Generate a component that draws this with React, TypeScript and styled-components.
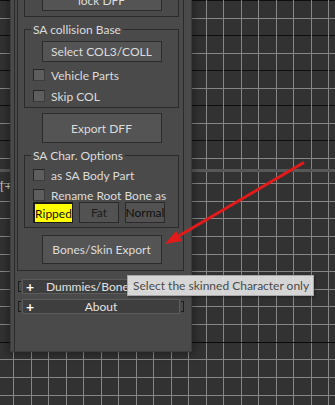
import React from 'react';
import styled, { createGlobalStyle, css } from 'styled-components';

// Colours
const GRID = '#868686';
const VIEW_BG = '#323232';
const PANEL_BG = '#4a4a4a';
const DARK_LINE = '#2a2a2a';
const TEXT = '#dcdcdc';
const UI_FONT = '"Lato", "Noto Sans", sans-serif';

const GlobalStyle = createGlobalStyle`
	html, body {
		margin: 0;
		padding: 0;
		background: ${ VIEW_BG };
	}
	body {
		font-family: ${ UI_FONT };
		font-size: 12px;
		color: ${ TEXT };
	}
	* {
		box-sizing: border-box;
	}
`;

// Vertical grid lines sit at x = 13 and 31 (mod 35)
const columnLines = `linear-gradient(to right, transparent 13px, ${ GRID } 13px, ${ GRID } 14px, transparent 14px, transparent 31px, ${ GRID } 31px, ${ GRID } 32px, transparent 32px)`;

/**
 * Viewport screen
 */
const App: React.FC = () => (
	<>
		<GlobalStyle />
		<Desktop>
			<TopViewport />
			<Splitter />
			<BottomViewport>
				<ViewportLabel>[+]</ViewportLabel>
			</BottomViewport>

			<Panel>
				<ScrollArea>
					<Rollout>
						<Group $mt={ 8 } $pt={ 6 } $pb={ 5 }>
							<legend>Export</legend>
							<Button $h={ 21 }>lock DFF</Button>
						</Group>

						<Group $mt={ 5 } $pt={ 4 } $pb={ 5 }>
							<legend>SA collision Base</legend>
							<Button $h={ 21 }>Select COL3/COLL</Button>
							<CheckRow $mt={ 7 }>
								<CheckBox />
								Vehicle Parts
							</CheckRow>
							<CheckRow $mt={ 9 }>
								<CheckBox />
								Skip COL
							</CheckRow>
						</Group>

						<Button $h={ 30 } $mt={ 5 }>Export DFF</Button>

						<Group $mt={ 5 } $pt={ 0 } $pb={ 4 }>
							<legend>SA Char. Options</legend>
							<CheckRow $mt={ 6 }>
								<CheckBox />
								as SA Body Part
							</CheckRow>
							<CheckRow $mt={ 8 }>
								<CheckBox />
								Rename Root Bone as
							</CheckRow>
							<ToggleRow>
								<Toggle $active>Ripped</Toggle>
								<Toggle>Fat</Toggle>
								<Toggle $dark>Normal</Toggle>
							</ToggleRow>
						</Group>

						<Button $h={ 29 } $mt={ 7 }>Bones/Skin Export</Button>
					</Rollout>

					<RolloutStub $mt={ 8 }>
						<Bracket />
						<StubBar>
							<Plus>+</Plus>
							<StubTitle $left>Dummies/Bones Helper</StubTitle>
						</StubBar>
						<Bracket $right />
					</RolloutStub>
					<RolloutStub $mt={ 5 }>
						<Bracket />
						<StubBar>
							<Plus>+</Plus>
							<StubTitle>About</StubTitle>
						</StubBar>
						<Bracket $right />
					</RolloutStub>
				</ScrollArea>
			</Panel>

			<Arrow viewBox="0 0 335 405" width="335" height="405">
				<line x1="303" y1="163" x2="177" y2="237" stroke="#e31a1a" strokeWidth="3" strokeLinecap="round" />
				<polygon points="165,244 182,241 176,231" fill="#e31a1a" />
			</Arrow>

			<Tooltip>Select the skinned Character only</Tooltip>
		</Desktop>
	</>
);
export default App;

// Styles
const Desktop = styled.div`
	position: relative;
	width: 335px;
	height: 405px;
	overflow: hidden;
	display: flex;
	flex-direction: column;
	background: ${ VIEW_BG };
`;

const viewportBase = css`
	position: relative;
	background-color: ${ VIEW_BG };
	background-repeat: repeat;
`;

const TopViewport = styled.div`
	${ viewportBase };
	height: 169px;
	background-image:
		${ columnLines },
		linear-gradient(to bottom, #0d0d0d 1px, transparent 1px, transparent 18px, ${ GRID } 18px, ${ GRID } 19px, transparent 19px);
	background-size: 35px 100%, 100% 35px;
`;

const Splitter = styled.div`
	height: 3px;
	background: #585858;
`;

const BottomViewport = styled.div`
	${ viewportBase };
	flex: 1;
	padding: 8px 0 0 0;
	background-image:
		linear-gradient(#0a0a0a, #0a0a0a),
		${ columnLines },
		repeating-linear-gradient(to bottom, transparent 0, transparent 11px, ${ GRID } 11px, ${ GRID } 12px, transparent 12px, transparent 17.64px);
	background-size: 100% 1px, 35px 100%, 100% 100%;
	background-position: 0 170px, 0 0, 0 0;
	background-repeat: no-repeat, repeat, no-repeat;
`;

const ViewportLabel = styled.div`
	font-size: 12px;
	line-height: 12px;
	color: #d4d4d4;
	letter-spacing: 1px;
`;

const Panel = styled.div`
	position: absolute;
	left: 10px;
	top: -40px;
	width: 182px;
	height: 392px;
	display: flex;
	padding: 0 7px 0 3px;
	background: ${ PANEL_BG };
	border: 1px solid #3c3c3c;
	box-shadow: 0 0 9px 2px rgba(0, 0, 0, 0.35);
`;

const ScrollArea = styled.div`
	flex: 1;
	display: flex;
	flex-direction: column;
	padding-left: 2px;
	border-left: 1px solid ${ DARK_LINE };
`;

const Rollout = styled.div`
	display: flex;
	flex-direction: column;
	padding: 0 4px 6px 6px;
	border: 1px solid ${ DARK_LINE };
	border-top: none;
`;

const Group = styled.fieldset<{ $mt: number; $pt: number; $pb: number }>`
	display: flex;
	flex-direction: column;
	margin: ${ p => p.$mt }px 0 0 0;
	padding: ${ p => p.$pt }px 0 ${ p => p.$pb }px 0;
	border: 1px solid ${ DARK_LINE };
	min-width: 0;

	legend {
		margin-left: 6px;
		padding: 0 2px;
		height: 15px;
		line-height: 15px;
		font-size: 12px;
		color: ${ TEXT };
	}
`;

const Button = styled.div<{ $h: number; $mt?: number }>`
	align-self: center;
	width: 120px;
	height: ${ p => p.$h }px;
	margin-top: ${ p => p.$mt ?? 0 }px;
	display: flex;
	align-items: center;
	justify-content: center;
	background: #545454;
	border: 1px solid #2c2c2c;
	font-size: 12px;
	color: ${ TEXT };
`;

const CheckRow = styled.div<{ $mt: number }>`
	display: flex;
	align-items: center;
	gap: 6px;
	height: 12px;
	margin: ${ p => p.$mt }px 0 0 8px;
	font-size: 12px;
	white-space: nowrap;
`;

const CheckBox = styled.span`
	flex: none;
	width: 12px;
	height: 12px;
	background: #5e5e5e;
	border: 1px solid #262626;
	border-right-color: #3c3c3c;
	border-bottom-color: #3c3c3c;
`;

const ToggleRow = styled.div`
	display: flex;
	gap: 6px;
	margin: 1px 0 0 8px;
`;

const Toggle = styled.div<{ $active?: boolean; $dark?: boolean }>`
	width: 40px;
	height: 21px;
	display: flex;
	align-items: center;
	justify-content: center;
	font-size: 12px;
	background: ${ p => (p.$active ? '#ffff00' : '#525252') };
	color: ${ p => (p.$active ? '#111' : p.$dark ? '#101010' : '#1c1c1c') };
	border: 1px solid #2a2a2a;
	${ p => p.$active && css`
		border-top-width: 2px;
		border-left-width: 2px;
		border-color: #1a1a1a;
	` }
`;

const RolloutStub = styled.div<{ $mt: number }>`
	display: flex;
	align-items: center;
	gap: 1px;
	height: 15px;
	margin-top: ${ p => p.$mt }px;
	padding: 0 0 0 1px;
`;

const Bracket = styled.span<{ $right?: boolean }>`
	flex: none;
	width: 3px;
	height: 11px;
	border: 1px solid #1c1c1c;
	${ p => (p.$right ? 'border-left: none;' : 'border-right: none;') }
`;

const StubBar = styled.div`
	position: relative;
	flex: 1;
	height: 15px;
	display: flex;
	align-items: center;
	background: #3e3e3e;
	border: 1px solid #5c5c5c;
`;

const Plus = styled.span`
	width: 16px;
	padding-left: 3px;
	font-size: 14px;
	font-weight: 700;
	line-height: 13px;
	color: #fff;
`;

const StubTitle = styled.span<{ $left?: boolean }>`
	flex: 1;
	padding-left: ${ p => (p.$left ? '7px' : '0') };
	padding-right: ${ p => (p.$left ? '0' : '16px') };
	text-align: ${ p => (p.$left ? 'left' : 'center') };
	font-size: 12px;
	line-height: 13px;
	white-space: nowrap;
	color: #e2e2e2;
`;

const Arrow = styled.svg`
	position: absolute;
	left: 0;
	top: 0;
	pointer-events: none;
`;

const Tooltip = styled.div`
	position: absolute;
	left: 127px;
	top: 275px;
	width: 187px;
	height: 21px;
	padding-left: 5px;
	display: flex;
	align-items: center;
	background: rgba(226, 226, 226, 0.93);
	border: 1px solid #a8a8a8;
	box-shadow: 1px 1px 2px rgba(0, 0, 0, 0.35);
	font-size: 12px;
	color: #4a4a4a;
	white-space: nowrap;
`;
